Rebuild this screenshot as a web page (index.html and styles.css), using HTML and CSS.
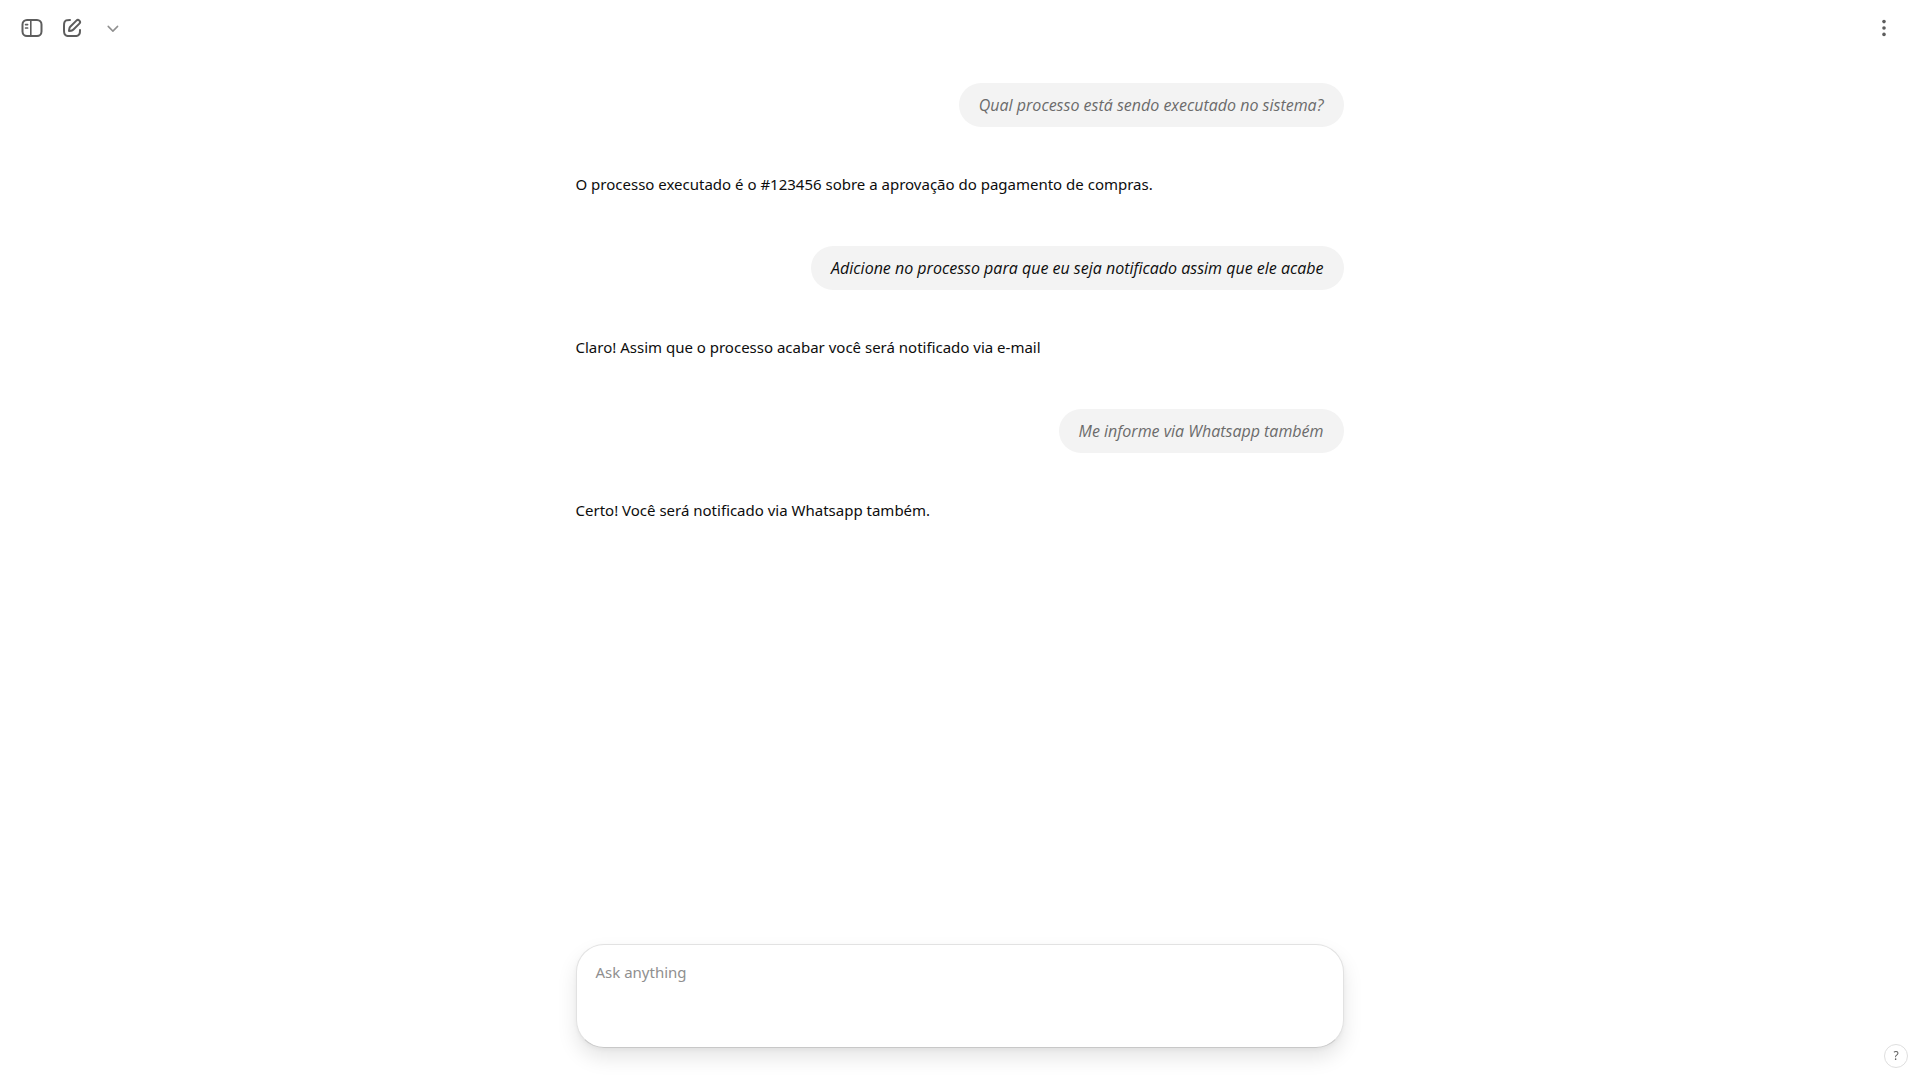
FILE: index.html
```html
<!DOCTYPE html>
<html lang="pt-BR">
<head>
<meta charset="utf-8">
<meta name="viewport" content="width=device-width, initial-scale=1">
<title>Chat</title>
<link rel="stylesheet" href="styles.css">
</head>
<body class="app">
<header class="topbar">
  <div class="topbar-group">
    <button class="icon-button" type="button" aria-label="Open sidebar">
      <svg width="24" height="24" viewBox="0 0 24 24" fill="none" stroke="currentColor" stroke-width="2">
        <rect x="2.5" y="4" width="19" height="16" rx="4.5"/>
        <path d="M10.8 4v16" stroke-width="1.6"/>
        <path d="M5.600 8.600h2M5.600 12h2" stroke-width="1.7" stroke-linecap="round"/>
      </svg>
    </button>
    <button class="icon-button" type="button" aria-label="New chat">
      <svg width="24" height="24" viewBox="0 0 24 24" fill="none" stroke="currentColor" stroke-width="2" stroke-linecap="round">
        <path fill="currentColor" stroke="none" fill-rule="evenodd" d="M15.673 3.913a3.121 3.121 0 1 1 4.414 4.414l-5.937 5.937a5 5 0 0 1-2.828 1.415l-2.18.31a1 1 0 0 1-1.132-1.13l.311-2.18A5 5 0 0 1 9.736 9.85zm3 1.414a1.12 1.12 0 0 0-1.586 0l-5.937 5.937a3 3 0 0 0-.849 1.697l-.123.86.86-.122a3 3 0 0 0 1.698-.849l5.937-5.937a1.12 1.12 0 0 0 0-1.586"/>
        <path d="M10 4C7.800 4 7 4.020 6.184 4.436A4 4 0 0 0 4.436 6.184C4 7.040 4 8.160 4 10.400v3.200c0 2.240 0 3.360.436 4.216a4 4 0 0 0 1.748 1.748C7.040 20 8.160 20 10.400 20h3.200c2.240 0 3.360 0 4.216-.436a4 4 0 0 0 1.748-1.748C19.980 17 20 16.200 20 14"/>
      </svg>
    </button>
    <button class="icon-button chevron" type="button" aria-label="Choose model">
      <svg width="24" height="24" viewBox="0 0 24 24" fill="none" stroke="currentColor" stroke-width="1.5" stroke-linecap="round" stroke-linejoin="round">
        <path d="M8.200 10.400l4.700 4.700 4.700-4.700"/>
      </svg>
    </button>
  </div>
  <button class="icon-button" type="button" aria-label="More options">
    <svg width="24" height="24" viewBox="0 0 24 24" fill="currentColor">
      <circle cx="12" cy="5.600" r="1.800"/><circle cx="12" cy="12" r="1.800"/><circle cx="12" cy="18.400" r="1.800"/>
    </svg>
  </button>
</header>
<main class="thread">
  <p class="question muted">Qual processo está sendo executado no sistema?</p>
  <p class="answer">O processo executado é o #123456 sobre a aprovação do pagamento de compras.</p>
  <p class="question">Adicione no processo para que eu seja notificado assim que ele acabe</p>
  <p class="answer">Claro! Assim que o processo acabar você será notificado via e-mail</p>
  <p class="question muted">Me informe via Whatsapp também</p>
  <p class="answer">Certo! Você será notificado via Whatsapp também.</p>
</main>
<form class="composer">
  <textarea class="prompt" aria-label="Message" placeholder="Ask anything"></textarea>
</form>
<button class="help" type="button" aria-label="Help">?</button>
</body>
</html>
```

FILE: styles.css
```css
* {
  box-sizing: border-box;
}

.app {
  display: flex;
  flex-direction: column;
  min-height: 100vh;
  margin: 0;
  background: #fff;
  color: #0d0d0d;
  font-family: "Noto Sans", "Open Sans", sans-serif;
  font-size: 15px;
  line-height: 24px;
}

.topbar {
  display: flex;
  align-items: center;
  justify-content: space-between;
  height: 56px;
  padding: 0 15px 0 12px;
}

.topbar-group {
  display: flex;
}

.icon-button {
  display: grid;
  place-items: center;
  width: 40px;
  height: 40px;
  padding: 0;
  border: 0;
  border-radius: 8px;
  background: none;
  color: #5d5d5d;
  cursor: pointer;
}

.chevron {
  color: #8f8f8f;
}

.thread,
.composer {
  width: 100%;
  max-width: 768px;
  margin: 0 auto;
}

.thread {
  display: flex;
  flex: 1;
  flex-direction: column;
  padding-top: 27px;
}

.question {
  align-self: flex-end;
  margin: 0;
  padding: 10px 20px;
  border-radius: 22px;
  background: #f3f3f3;
  font-family: "Open Sans", "Noto Sans", sans-serif;
  font-size: 16px;
  font-style: italic;
}

.muted {
  color: #6b6b6b;
}

.answer {
  margin: 45px 0 50px;
}

.composer {
  display: flex;
  margin-bottom: 31px;
}

.prompt {
  flex: 1;
  height: 104px;
  padding: 15px 19px;
  border: 1px solid #e2e2e2;
  border-bottom-color: #c8c8c8;
  border-radius: 28px;
  outline: 0;
  background: #fff;
  box-shadow: 0 10px 20px rgb(0 0 0 / 10%), 0 2px 4px rgb(0 0 0 / 4%);
  color: inherit;
  font: inherit;
  resize: none;
}

.prompt::placeholder {
  color: #8f8f8f;
  opacity: 1;
}

.help {
  position: fixed;
  right: 11px;
  bottom: 11px;
  width: 24px;
  height: 24px;
  padding: 0;
  border: 1px solid #dedede;
  border-radius: 50%;
  background: #fff;
  color: #5d5d5d;
  font: 12px/20px "Noto Sans", "Open Sans", sans-serif;
  cursor: pointer;
}
```
